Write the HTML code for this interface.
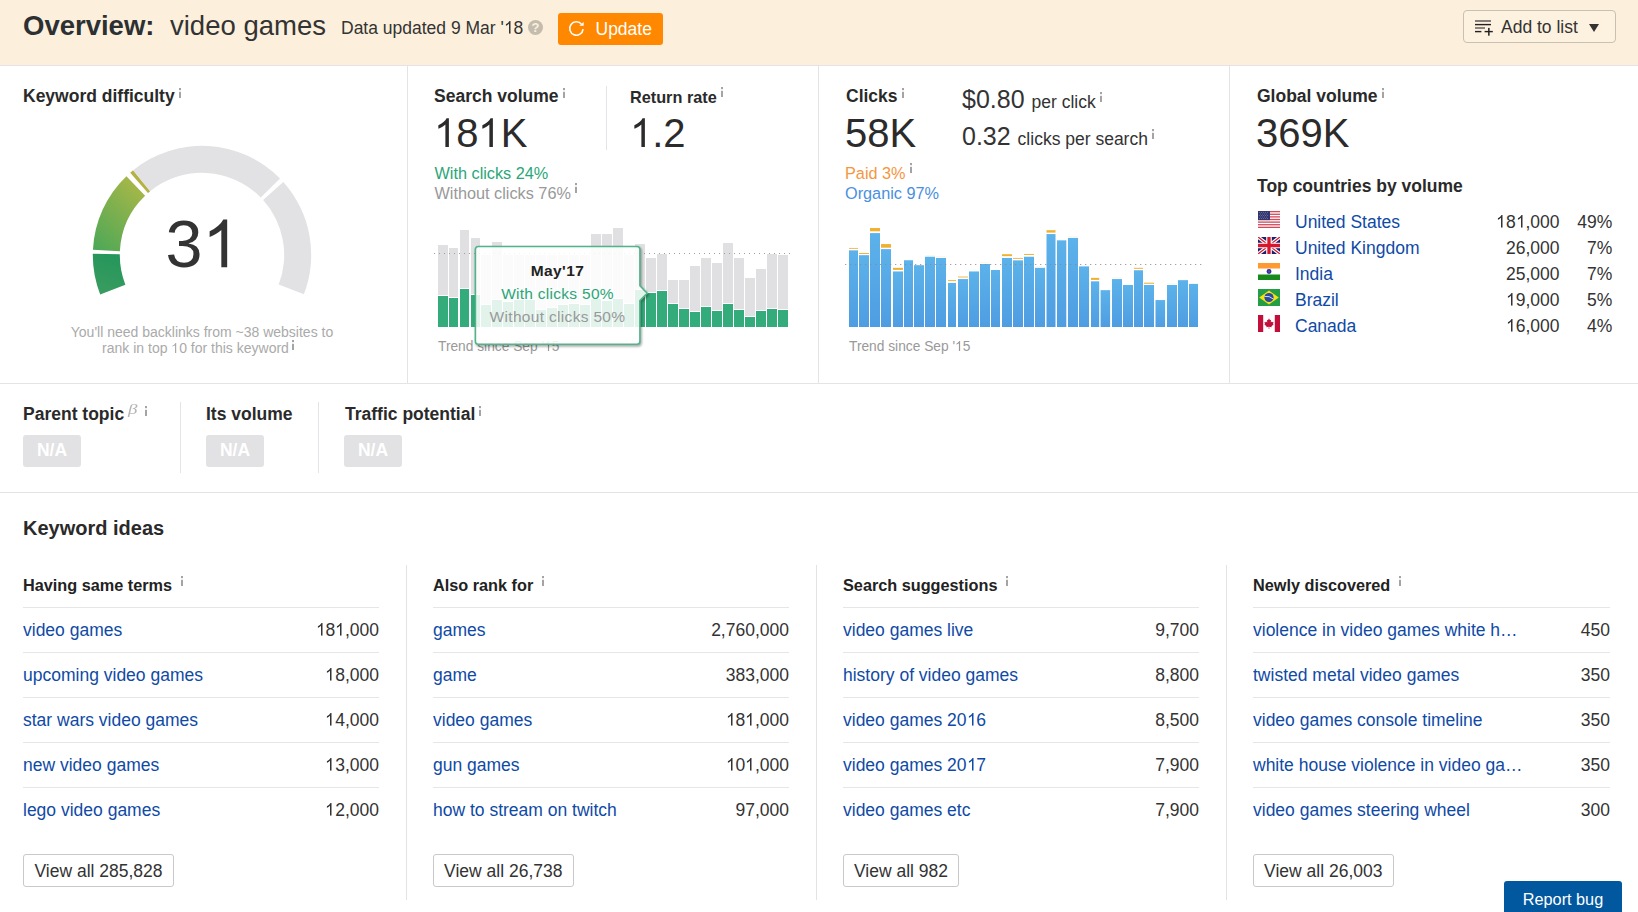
<!DOCTYPE html>
<html>
<head>
<meta charset="utf-8">
<title>Overview: video games</title>
<style>
*{box-sizing:border-box;margin:0;padding:0}
html,body{width:1638px;height:912px;overflow:hidden;background:#fff}
body{font-family:"Liberation Sans",sans-serif;font-size:17.5px;color:#333;position:relative}
.abs{position:absolute;white-space:nowrap;line-height:1}
.b{font-weight:bold;color:#2a2a2a}
.i{font-size:13.75px;color:#b3b3b3;position:relative;top:-3.5px;margin-left:3px;font-weight:normal}
.hl{position:absolute;background:#e4e4e8;height:1px}
.vl{position:absolute;background:#e4e4e8;width:1px}
a,.lnk{color:#0f4aa6;text-decoration:none}
.big{font-size:40px;color:#2b2b2b}
.one{width:0.5562em;height:0.7227em;vertical-align:baseline;fill:currentColor;display:inline-block}
.sm{font-size:13.75px;color:#999}
#hdr{position:absolute;left:0;top:0;width:1638px;height:65px;background:#fcf0dc}
.btn{position:absolute;border:1px solid #c9c9c9;border-radius:3px;background:#fff;font-size:17.5px;color:#333;line-height:1;white-space:nowrap}
.na{position:absolute;width:58px;height:32px;background:#e2e2e4;border-radius:3px;color:#fff;font-weight:bold;font-size:17.5px;text-align:center;line-height:31px}
.row{position:absolute;height:45px;border-top:1px solid #e6e6e6;font-size:17.5px;line-height:44px;white-space:nowrap}
.row .n{position:absolute;right:0;top:0;color:#333}
.colh{font-size:16.25px;font-weight:bold;color:#222}
</style>
</head>
<body>
<!-- HEADER -->
<div id="hdr"></div>
<div class="abs b" style="left:23px;top:11.5px;font-size:27.5px;color:#2d3033">Overview:</div>
<div class="abs" style="left:170px;top:11.5px;font-size:27.5px;color:#333">video games</div>
<div class="abs" style="left:341px;top:20px;font-size:17.5px;color:#333">Data updated 9 Mar '<svg class="one"><use href="#one"/></svg>8</div>
<div class="abs" style="left:528px;top:20px;width:15px;height:15px;border-radius:8px;background:#c4bcae;color:#fcf0dc;font-size:13px;font-weight:bold;text-align:center;line-height:15px">?</div>
<div class="abs" style="left:558px;top:13px;width:105px;height:32px;background:#ff8800;border-radius:3px"></div>
<svg class="abs" style="left:568px;top:20px" width="18" height="18" viewBox="0 0 18 18"><path d="M15.07 9.08A6.7 6.7 0 1 1 13.68 4.37" fill="none" stroke="#fff" stroke-width="1.6"/><path d="M15.7 1.9V5.7H11.3z" fill="#fff"/></svg>
<div class="abs" style="left:595.5px;top:21px;font-size:17.5px;color:#fff">Update</div>
<div class="abs" style="left:1463px;top:10px;width:153px;height:33px;border:1px solid #c8c0b0;border-radius:4px;background:#fdf1e0"></div>
<svg class="abs" style="left:1474px;top:19px" width="20" height="18" viewBox="0 0 20 18"><rect x="1" y="1" width="16" height="2" fill="#847e77"/><rect x="1" y="4.9" width="16" height="1.4" fill="#222"/><rect x="1" y="8" width="10" height="2" fill="#8a847c"/><rect x="1" y="11.9" width="6.4" height="1.4" fill="#222"/><rect x="10.6" y="11.9" width="8.2" height="1.4" fill="#222"/><rect x="14.1" y="8.9" width="1.5" height="7.8" fill="#222"/></svg>
<div class="abs" style="left:1501px;top:19px;font-size:17.5px;color:#333">Add to list</div>
<div class="abs" style="left:1589px;top:24px;width:0;height:0;border-left:5px solid transparent;border-right:5px solid transparent;border-top:8px solid #333"></div>

<!-- GRID LINES -->
<div class="hl" style="left:0;top:65px;width:1638px"></div>
<div class="hl" style="left:0;top:383px;width:1638px"></div>
<div class="hl" style="left:0;top:492px;width:1638px"></div>
<div class="vl" style="left:407px;top:66px;height:317px"></div>
<div class="vl" style="left:818px;top:66px;height:317px"></div>
<div class="vl" style="left:1229px;top:66px;height:317px"></div>

<!-- SECTIONS -->
<svg width="0" height="0" style="position:absolute"><defs><symbol id="one" viewBox="0 -1480 1139 1480"><path transform="scale(1 -1)" d="M763 0H583V1147Q518 1085 412.5 1023T223 930V1104Q373 1174.5 485 1275T644 1470H763V0Z"/></symbol></defs></svg>
<svg class="abs" style="left:179px;top:88px" width="2" height="10"><rect width="2" height="2" fill="#a4a4a4"/><rect y="2" width="2" height="2" fill="#a4a4a4" opacity=".18"/><rect y="4" width="2" height="6" fill="#a4a4a4"/></svg>
<svg class="abs" style="left:563px;top:88px" width="2" height="10"><rect width="2" height="2" fill="#a4a4a4"/><rect y="2" width="2" height="2" fill="#a4a4a4" opacity=".18"/><rect y="4" width="2" height="6" fill="#a4a4a4"/></svg>
<svg class="abs" style="left:721px;top:87px" width="2" height="10"><rect width="2" height="2" fill="#a4a4a4"/><rect y="2" width="2" height="2" fill="#a4a4a4" opacity=".18"/><rect y="4" width="2" height="6" fill="#a4a4a4"/></svg>
<svg class="abs" style="left:575px;top:183px" width="2" height="10"><rect width="2" height="2" fill="#a4a4a4"/><rect y="2" width="2" height="2" fill="#a4a4a4" opacity=".18"/><rect y="4" width="2" height="6" fill="#a4a4a4"/></svg>
<svg class="abs" style="left:902px;top:88px" width="2" height="10"><rect width="2" height="2" fill="#a4a4a4"/><rect y="2" width="2" height="2" fill="#a4a4a4" opacity=".18"/><rect y="4" width="2" height="6" fill="#a4a4a4"/></svg>
<svg class="abs" style="left:1100px;top:92px" width="2" height="10"><rect width="2" height="2" fill="#a4a4a4"/><rect y="2" width="2" height="2" fill="#a4a4a4" opacity=".18"/><rect y="4" width="2" height="6" fill="#a4a4a4"/></svg>
<svg class="abs" style="left:1152px;top:129px" width="2" height="10"><rect width="2" height="2" fill="#a4a4a4"/><rect y="2" width="2" height="2" fill="#a4a4a4" opacity=".18"/><rect y="4" width="2" height="6" fill="#a4a4a4"/></svg>
<svg class="abs" style="left:910px;top:163px" width="2" height="10"><rect width="2" height="2" fill="#a4a4a4"/><rect y="2" width="2" height="2" fill="#a4a4a4" opacity=".18"/><rect y="4" width="2" height="6" fill="#a4a4a4"/></svg>
<svg class="abs" style="left:1382px;top:88px" width="2" height="10"><rect width="2" height="2" fill="#a4a4a4"/><rect y="2" width="2" height="2" fill="#a4a4a4" opacity=".18"/><rect y="4" width="2" height="6" fill="#a4a4a4"/></svg>
<svg class="abs" style="left:145px;top:406px" width="2" height="10"><rect width="2" height="2" fill="#a4a4a4"/><rect y="2" width="2" height="2" fill="#a4a4a4" opacity=".18"/><rect y="4" width="2" height="6" fill="#a4a4a4"/></svg>
<svg class="abs" style="left:479px;top:406px" width="2" height="10"><rect width="2" height="2" fill="#a4a4a4"/><rect y="2" width="2" height="2" fill="#a4a4a4" opacity=".18"/><rect y="4" width="2" height="6" fill="#a4a4a4"/></svg>
<svg class="abs" style="left:181px;top:576px" width="2" height="10"><rect width="2" height="2" fill="#a4a4a4"/><rect y="2" width="2" height="2" fill="#a4a4a4" opacity=".18"/><rect y="4" width="2" height="6" fill="#a4a4a4"/></svg>
<svg class="abs" style="left:542px;top:576px" width="2" height="10"><rect width="2" height="2" fill="#a4a4a4"/><rect y="2" width="2" height="2" fill="#a4a4a4" opacity=".18"/><rect y="4" width="2" height="6" fill="#a4a4a4"/></svg>
<svg class="abs" style="left:1006px;top:576px" width="2" height="10"><rect width="2" height="2" fill="#a4a4a4"/><rect y="2" width="2" height="2" fill="#a4a4a4" opacity=".18"/><rect y="4" width="2" height="6" fill="#a4a4a4"/></svg>
<svg class="abs" style="left:1399px;top:576px" width="2" height="10"><rect width="2" height="2" fill="#a4a4a4"/><rect y="2" width="2" height="2" fill="#a4a4a4" opacity=".18"/><rect y="4" width="2" height="6" fill="#a4a4a4"/></svg>
<svg class="abs" style="left:292px;top:340px" width="2" height="10"><rect width="2" height="2" fill="#a4a4a4"/><rect y="2" width="2" height="2" fill="#a4a4a4" opacity=".18"/><rect y="4" width="2" height="6" fill="#a4a4a4"/></svg>
<!--KD-->
<svg class="abs" style="left:0;top:66px" width="407" height="317" viewBox="0 66 407 317">
<defs><linearGradient id="g1" gradientUnits="userSpaceOnUse" x1="100" y1="294" x2="112" y2="253"><stop offset="0" stop-color="#3a9c60"/><stop offset="1" stop-color="#24965a"/></linearGradient><linearGradient id="g2" gradientUnits="userSpaceOnUse" x1="94" y1="246" x2="147" y2="190"><stop offset="0" stop-color="#4fa857"/><stop offset="0.55" stop-color="#7fb04e"/><stop offset="1" stop-color="#a9b848"/></linearGradient></defs>
<path d="M100.19 294.49A109.2 109.2 0 0 1 92.81 253.86L119.80 254.14A82.2 82.2 0 0 0 125.36 284.73Z" fill="url(#g1)"/>
<path d="M92.92 249.86A109.2 109.2 0 0 1 126.42 176.18L145.11 195.67A82.2 82.2 0 0 0 119.89 251.13Z" fill="url(#g2)"/>
<path d="M130.21 172.71A109.2 109.2 0 0 1 133.13 170.26L150.16 191.21A82.2 82.2 0 0 0 147.96 193.06Z" fill="#b4b145"/>
<path d="M133.06 170.32A109.2 109.2 0 0 1 280.02 178.60L260.73 197.49A82.2 82.2 0 0 0 150.10 191.25Z" fill="#e2e2e4"/>
<path d="M283.28 182.07A109.2 109.2 0 0 1 303.88 294.31L278.69 284.59A82.2 82.2 0 0 0 263.18 200.10Z" fill="#e2e2e4"/>
</svg>
<div class="abs b" style="left:23px;top:87.5px">Keyword difficulty</div>
<div class="abs" style="left:165.4px;top:210.9px;font-size:66.5px;color:#333">3</div>
<svg class="abs" style="left:200px;top:215px" width="34" height="56" viewBox="200 215 34 56"><path transform="translate(202.4 267.2) scale(0.032470703125 -0.032470703125)" d="M763 0H583V1147Q518 1085 412.5 1023T223 930V1104Q373 1174.5 485 1275T644 1470H763V0Z" fill="#333"/></svg>
<div class="abs sm" style="left:2px;top:325px;width:400px;text-align:center;color:#aaa;font-size:14px">You'll need backlinks from ~38 websites to</div>
<div class="abs sm" style="left:-4.5px;top:341px;width:400px;text-align:center;color:#aaa;font-size:14px">rank in top <svg class="one"><use href="#one"/></svg>0 for this keyword</div>

<!--SV-->
<div class="abs b" style="left:434px;top:87.5px">Search volume</div>
<div class="abs big" style="left:434px;top:113.2px"><svg class="one"><use href="#one"/></svg>8<svg class="one"><use href="#one"/></svg>K</div>
<div class="vl" style="left:606px;top:86px;height:64px"></div>
<div class="abs b" style="left:630px;top:89px;font-size:16.25px">Return rate</div>
<div class="abs big" style="left:630px;top:113.2px"><svg class="one"><use href="#one"/></svg>.2</div>
<div class="abs" style="left:434.5px;top:165px;font-size:16.25px;color:#2aa678">With clicks 24%</div>
<div class="abs" style="left:434.5px;top:185px;font-size:16.25px;color:#999">Without clicks 76%</div>
<div class="abs sm" style="left:438px;top:340px">Trend since Sep '<svg class="one"><use href="#one"/></svg>5</div>

<svg class="abs" style="left:428px;top:220px" width="380" height="112" viewBox="428 220 380 112" shape-rendering="crispEdges">
<path d="M437.60 245.05h9.9V295.09h-9.9zM448.57 247.84h9.9V296.72h-9.9zM459.54 230.44h9.9V287.90h-9.9zM470.51 238.10h9.9V293.70h-9.9zM481.48 254.80h9.9V303.68h-9.9zM492.45 242.04h9.9V299.04h-9.9zM503.42 254.80h9.9V301.36h-9.9zM514.39 254.80h9.9V299.04h-9.9zM525.36 254.80h9.9V299.04h-9.9zM536.33 254.80h9.9V309.01h-9.9zM547.30 254.80h9.9V306.69h-9.9zM558.27 254.80h9.9V304.14h-9.9zM569.24 254.80h9.9V302.52h-9.9zM580.21 254.80h9.9V304.14h-9.9zM591.18 234.38h9.9V298.34h-9.9zM602.15 234.38h9.9V300.20h-9.9zM613.12 228.12h9.9V297.88h-9.9zM624.09 254.80h9.9V302.98h-9.9zM635.06 244.36h9.9V289.29h-9.9zM646.03 257.81h9.9V291.61h-9.9zM657.00 254.10h9.9V290.45h-9.9zM667.97 279.85h9.9V302.98h-9.9zM678.94 279.85h9.9V307.62h-9.9zM689.91 266.40h9.9V311.33h-9.9zM700.88 257.81h9.9V306.46h-9.9zM711.85 262.92h9.9V309.94h-9.9zM722.82 242.74h9.9V302.98h-9.9zM733.79 257.81h9.9V308.78h-9.9zM744.76 277.53h9.9V316.44h-9.9zM755.73 268.72h9.9V309.94h-9.9zM766.70 253.64h9.9V307.62h-9.9zM777.67 255.26h9.9V308.78h-9.9z" fill="#e0e0e3"/>
<path d="M437.60 296.09h9.9V327h-9.9zM448.57 297.72h9.9V327h-9.9zM459.54 288.90h9.9V327h-9.9zM470.51 294.70h9.9V327h-9.9zM481.48 304.68h9.9V327h-9.9zM492.45 300.04h9.9V327h-9.9zM503.42 302.36h9.9V327h-9.9zM514.39 300.04h9.9V327h-9.9zM525.36 300.04h9.9V327h-9.9zM536.33 310.01h9.9V327h-9.9zM547.30 307.69h9.9V327h-9.9zM558.27 305.14h9.9V327h-9.9zM569.24 303.52h9.9V327h-9.9zM580.21 305.14h9.9V327h-9.9zM591.18 299.34h9.9V327h-9.9zM602.15 301.20h9.9V327h-9.9zM613.12 298.88h9.9V327h-9.9zM624.09 303.98h9.9V327h-9.9zM635.06 290.29h9.9V327h-9.9zM646.03 292.61h9.9V327h-9.9zM657.00 291.45h9.9V327h-9.9zM667.97 303.98h9.9V327h-9.9zM678.94 308.62h9.9V327h-9.9zM689.91 312.33h9.9V327h-9.9zM700.88 307.46h9.9V327h-9.9zM711.85 310.94h9.9V327h-9.9zM722.82 303.98h9.9V327h-9.9zM733.79 309.78h9.9V327h-9.9zM744.76 317.44h9.9V327h-9.9zM755.73 310.94h9.9V327h-9.9zM766.70 308.62h9.9V327h-9.9zM777.67 309.78h9.9V327h-9.9z" fill="#34ab7a"/>
<path d="M434 253.5H792" stroke="#a0a0a0" stroke-width="1" stroke-dasharray="1.3 3.7" fill="none"/>
</svg>
<svg class="abs" style="left:464px;top:236px" width="200" height="120" viewBox="464 236 200 120"><defs><clipPath id="tc"><path clip-rule="evenodd" d="M464 236H664V356H464ZM478.4 246.5H636.9A3 3 0 0 1 639.9 249.5V285.8L647.1 293.2L639.9 300.6V341.2A3 3 0 0 1 636.9 344.2H478.4A3 3 0 0 1 475.4 341.2V249.5A3 3 0 0 1 478.4 246.5Z"/></clipPath><filter id="tb" x="-10%" y="-10%" width="120%" height="120%"><feGaussianBlur stdDeviation="1.3"/></filter></defs><g clip-path="url(#tc)"><path d="M478.4 246.5H636.9A3 3 0 0 1 639.9 249.5V285.8L647.1 293.2L639.9 300.6V341.2A3 3 0 0 1 636.9 344.2H478.4A3 3 0 0 1 475.4 341.2V249.5A3 3 0 0 1 478.4 246.5Z" transform="translate(1 1.5)" fill="#000" stroke="#000" stroke-width="2" opacity="0.33" filter="url(#tb)"/></g><path d="M478.4 246.5H636.9A3 3 0 0 1 639.9 249.5V285.8L647.1 293.2L639.9 300.6V341.2A3 3 0 0 1 636.9 344.2H478.4A3 3 0 0 1 475.4 341.2V249.5A3 3 0 0 1 478.4 246.5Z" fill="rgba(255,255,255,0.86)" stroke="#52b48a" stroke-width="1.6"/></svg>
<div class="abs b" style="left:476px;top:263px;width:163px;text-align:center;font-size:15.5px;color:#222;letter-spacing:0.4px">May'17</div>
<div class="abs" style="left:476px;top:286px;width:163px;text-align:center;font-size:15.5px;color:#2aa678;letter-spacing:0.28px">With clicks 50%</div>
<div class="abs" style="left:476px;top:309px;width:163px;text-align:center;font-size:15.5px;color:#999;letter-spacing:0.32px">Without clicks 50%</div>

<!--CL-->
<div class="abs b" style="left:846px;top:87.5px">Clicks</div>
<div class="abs big" style="left:845px;top:113.2px">58K</div>
<div class="abs" style="left:962px;top:87px;font-size:25px;color:#333">$0.80 <span style="font-size:17.5px">per click</span></div>
<div class="abs" style="left:962px;top:124px;font-size:25px;color:#333">0.32 <span style="font-size:17.5px">clicks per search</span></div>
<div class="abs" style="left:845px;top:165px;font-size:16.25px;color:#f59640">Paid 3%</div>
<div class="abs" style="left:845px;top:185px;font-size:16.25px;color:#4a8fe0">Organic 97%</div>
<div class="abs sm" style="left:849px;top:340px">Trend since Sep '<svg class="one"><use href="#one"/></svg>5</div>

<svg class="abs" style="left:840px;top:220px" width="380" height="112" viewBox="840 220 380 112">
<defs><linearGradient id="bg" x1="0" y1="0" x2="0" y2="1" gradientUnits="objectBoundingBox"><stop offset="0" stop-color="#5cb2ea"/><stop offset="1" stop-color="#4e9de2"/></linearGradient></defs>
<rect x="849" y="250.35" width="9" height="76.65" fill="url(#bg)"/>
<rect x="849" y="247.94" width="9" height="0.84" fill="#f0b130" opacity="1"/>
<rect x="859" y="255.17" width="10" height="71.83" fill="url(#bg)"/>
<rect x="859" y="253.00" width="10" height="0.97" fill="#f0b130" opacity="1"/>
<rect x="870" y="233.10" width="10" height="93.90" fill="url(#bg)"/>
<rect x="870" y="228.03" width="10" height="3.26" fill="#f0b130" opacity="1"/>
<rect x="881" y="249.14" width="10" height="77.86" fill="url(#bg)"/>
<rect x="881" y="244.08" width="10" height="3.62" fill="#f0b130" opacity="1"/>
<rect x="893" y="271.46" width="10" height="55.54" fill="url(#bg)"/>
<rect x="893" y="267.84" width="10" height="2.05" fill="#f0b130" opacity="1"/>
<rect x="904" y="260.24" width="9" height="66.76" fill="url(#bg)"/>
<rect x="914" y="265.19" width="10" height="61.81" fill="url(#bg)"/>
<rect x="925" y="256.74" width="10" height="70.26" fill="url(#bg)"/>
<rect x="925" y="255.66" width="10" height="0.36" fill="#f0b130" opacity="0.3"/>
<rect x="936" y="257.95" width="10" height="69.05" fill="url(#bg)"/>
<rect x="936" y="256.50" width="10" height="0.36" fill="#f0b130" opacity="0.3"/>
<rect x="948" y="282.92" width="8" height="44.08" fill="url(#bg)"/>
<rect x="948" y="280.15" width="8" height="0.97" fill="#f0b130" opacity="1"/>
<rect x="958" y="279.06" width="10" height="47.94" fill="url(#bg)"/>
<rect x="958" y="276.29" width="10" height="1.45" fill="#f0b130" opacity="0.6"/>
<rect x="969" y="271.46" width="10" height="55.54" fill="url(#bg)"/>
<rect x="980" y="263.98" width="10" height="63.02" fill="url(#bg)"/>
<rect x="980" y="262.29" width="10" height="0.36" fill="#f0b130" opacity="0.25"/>
<rect x="991" y="270.01" width="9" height="56.99" fill="url(#bg)"/>
<rect x="1002" y="257.95" width="10" height="69.05" fill="url(#bg)"/>
<rect x="1002" y="254.21" width="10" height="1.93" fill="#f0b130" opacity="1"/>
<rect x="1013" y="260.36" width="10" height="66.64" fill="url(#bg)"/>
<rect x="1013" y="257.95" width="10" height="0.84" fill="#f0b130" opacity="1"/>
<rect x="1024" y="256.74" width="10" height="70.26" fill="url(#bg)"/>
<rect x="1024" y="253.97" width="10" height="0.97" fill="#f0b130" opacity="1"/>
<rect x="1035" y="267.84" width="10" height="59.16" fill="url(#bg)"/>
<rect x="1035" y="266.51" width="10" height="0.36" fill="#f0b130" opacity="0.25"/>
<rect x="1046.5" y="234.06" width="9" height="92.94" fill="url(#bg)"/>
<rect x="1046.5" y="230.20" width="9" height="2.41" fill="#f0b130" opacity="1"/>
<rect x="1057" y="240.34" width="9.3" height="86.66" fill="url(#bg)"/>
<rect x="1068" y="237.92" width="10" height="89.08" fill="url(#bg)"/>
<rect x="1068" y="236.36" width="10" height="0.36" fill="#f0b130" opacity="0.3"/>
<rect x="1079" y="266.39" width="10" height="60.61" fill="url(#bg)"/>
<rect x="1091" y="281.35" width="8.2" height="45.65" fill="url(#bg)"/>
<rect x="1091" y="277.85" width="8.2" height="2.05" fill="#f0b130" opacity="1"/>
<rect x="1100.6" y="290.16" width="9.5" height="36.84" fill="url(#bg)"/>
<rect x="1112" y="279.06" width="10" height="47.94" fill="url(#bg)"/>
<rect x="1112" y="277.37" width="10" height="0.36" fill="#f0b130" opacity="0.25"/>
<rect x="1123" y="284.97" width="10" height="42.03" fill="url(#bg)"/>
<rect x="1134" y="270.25" width="9" height="56.75" fill="url(#bg)"/>
<rect x="1134" y="267.84" width="9" height="0.97" fill="#f0b130" opacity="1"/>
<rect x="1144" y="284.97" width="10" height="42.03" fill="url(#bg)"/>
<rect x="1144" y="282.68" width="10" height="1.09" fill="#f0b130" opacity="1"/>
<rect x="1155.5" y="300.05" width="9.6" height="26.95" fill="url(#bg)"/>
<rect x="1167" y="284.97" width="10" height="42.03" fill="url(#bg)"/>
<rect x="1167" y="283.52" width="10" height="0.36" fill="#f0b130" opacity="0.2"/>
<rect x="1178" y="280.15" width="10" height="46.85" fill="url(#bg)"/>
<rect x="1189" y="283.89" width="9" height="43.11" fill="url(#bg)"/>
<path d="M845 264.5H1203" stroke="#8a8a8a" stroke-width="1" stroke-dasharray="1.3 3.7" fill="none" opacity="0.8"/>
</svg>
<!--GV-->
<div class="abs b" style="left:1257px;top:87.5px">Global volume</div>
<div class="abs big" style="left:1256px;top:113.2px">369K</div>
<div class="abs b" style="left:1257px;top:178px">Top countries by volume</div>
<!-- flags -->
<svg class="abs" style="left:1258px;top:211px" width="22" height="17" viewBox="0 0 22 17"><rect width="22" height="17" fill="#fff"/><g fill="#d2495a"><rect y="0" width="22" height="1.31"/><rect y="2.62" width="22" height="1.31"/><rect y="5.23" width="22" height="1.31"/><rect y="7.85" width="22" height="1.31"/><rect y="10.46" width="22" height="1.31"/><rect y="13.08" width="22" height="1.31"/><rect y="15.69" width="22" height="1.31"/></g><rect width="12" height="9.15" fill="#32366f"/><g fill="#8f93b8"><circle cx="1.6" cy="1.5" r=".45"/><circle cx="3.6" cy="1.5" r=".45"/><circle cx="5.6" cy="1.5" r=".45"/><circle cx="7.6" cy="1.5" r=".45"/><circle cx="9.6" cy="1.5" r=".45"/><circle cx="2.6" cy="3" r=".45"/><circle cx="4.6" cy="3" r=".45"/><circle cx="6.6" cy="3" r=".45"/><circle cx="8.6" cy="3" r=".45"/><circle cx="1.6" cy="4.5" r=".45"/><circle cx="3.6" cy="4.5" r=".45"/><circle cx="5.6" cy="4.5" r=".45"/><circle cx="7.6" cy="4.5" r=".45"/><circle cx="9.6" cy="4.5" r=".45"/><circle cx="2.6" cy="6" r=".45"/><circle cx="4.6" cy="6" r=".45"/><circle cx="6.6" cy="6" r=".45"/><circle cx="8.6" cy="6" r=".45"/><circle cx="1.6" cy="7.5" r=".45"/><circle cx="3.6" cy="7.5" r=".45"/><circle cx="5.6" cy="7.5" r=".45"/><circle cx="7.6" cy="7.5" r=".45"/><circle cx="9.6" cy="7.5" r=".45"/></g></svg>
<svg class="abs" style="left:1258px;top:237px" width="22" height="17" viewBox="0 0 22 17"><defs><clipPath id="uk"><rect width="22" height="17"/></clipPath></defs><g clip-path="url(#uk)"><rect width="22" height="17" fill="#1b1f6e"/><path d="M0 0L22 17M22 0L0 17" stroke="#fff" stroke-width="3.6"/><path d="M0 0L22 17M22 0L0 17" stroke="#d8172c" stroke-width="1.3"/><path d="M11 0V17M0 8.5H22" stroke="#fff" stroke-width="5.6"/><path d="M11 0V17M0 8.5H22" stroke="#d8172c" stroke-width="3.3"/></g></svg>
<svg class="abs" style="left:1258px;top:263px" width="22" height="17" viewBox="0 0 22 17"><rect width="22" height="17" fill="#fff"/><rect width="22" height="5.5" fill="#ff9a33"/><rect y="11.5" width="22" height="5.5" fill="#178a1c"/><circle cx="11" cy="8.5" r="2.4" fill="#2a2a9c"/><circle cx="11" cy="8.5" r="1.2" fill="#4a4ab0"/></svg>
<svg class="abs" style="left:1258px;top:289px" width="22" height="17" viewBox="0 0 22 17"><rect width="22" height="17" fill="#239e46"/><path d="M11 1.6L20.8 8.5L11 15.4L1.2 8.5Z" fill="#f8e012"/><circle cx="11" cy="8.5" r="4.6" fill="#2b49a3"/><path d="M6.6 7.5Q11.2 6.4 15.3 10" stroke="#dfe6f5" stroke-width="0.9" fill="none"/></svg>
<svg class="abs" style="left:1258px;top:315px" width="22" height="17" viewBox="0 0 22 17"><rect width="22" height="17" fill="#fff"/><rect width="5.2" height="17" fill="#c20e38"/><rect x="16.8" width="5.2" height="17" fill="#c20e38"/><path d="M11 3.2L12 5.2L13.1 4.7L12.7 7.6L13.9 6.4L14.3 7.2L15.6 7L15 9L15.7 9.4L13.4 11.3L13.7 12.2L11.3 11.8V13.9H10.7V11.8L8.3 12.2L8.6 11.3L6.3 9.4L7 9L6.4 7L7.7 7.2L8.1 6.4L9.3 7.6L8.9 4.7L10 5.2Z" fill="#c20e38"/></svg>
<!-- rows -->
<div class="abs lnk" style="left:1295px;top:214px">United States</div><div class="abs" style="left:1439.5px;width:120px;text-align:right;top:214px"><svg class="one"><use href="#one"/></svg>8<svg class="one"><use href="#one"/></svg>,000</div><div class="abs" style="left:1559.4px;width:53px;text-align:right;top:214px">49%</div>
<div class="abs lnk" style="left:1295px;top:240px">United Kingdom</div><div class="abs" style="left:1439.5px;width:120px;text-align:right;top:240px">26,000</div><div class="abs" style="left:1559.4px;width:53px;text-align:right;top:240px">7%</div>
<div class="abs lnk" style="left:1295px;top:266px">India</div><div class="abs" style="left:1439.5px;width:120px;text-align:right;top:266px">25,000</div><div class="abs" style="left:1559.4px;width:53px;text-align:right;top:266px">7%</div>
<div class="abs lnk" style="left:1295px;top:292px">Brazil</div><div class="abs" style="left:1439.5px;width:120px;text-align:right;top:292px"><svg class="one"><use href="#one"/></svg>9,000</div><div class="abs" style="left:1559.4px;width:53px;text-align:right;top:292px">5%</div>
<div class="abs lnk" style="left:1295px;top:318px">Canada</div><div class="abs" style="left:1439.5px;width:120px;text-align:right;top:318px"><svg class="one"><use href="#one"/></svg>6,000</div><div class="abs" style="left:1559.4px;width:53px;text-align:right;top:318px">4%</div>

<!--PT-->
<div class="abs b" style="left:23px;top:406px">Parent topic<span style="font-family:'Liberation Serif',serif;font-style:italic;font-weight:normal;font-size:15.5px;color:#b4b4b4;position:relative;top:-6.5px;margin-left:4px;display:inline-block;transform:scaleX(1.22);transform-origin:left center">β</span></div>
<div class="na" style="left:23px;top:435px">N/A</div>
<div class="vl" style="left:180px;top:402px;height:71px"></div>
<div class="abs b" style="left:206px;top:406px">Its volume</div>
<div class="na" style="left:206px;top:435px">N/A</div>
<div class="vl" style="left:318px;top:402px;height:71px"></div>
<div class="abs b" style="left:345px;top:406px">Traffic potential</div>
<div class="na" style="left:344px;top:435px">N/A</div>

<!--KI-->
<div class="abs b" style="left:23px;top:517.5px;font-size:20px">Keyword ideas</div>
<div class="vl" style="background:#e3e3e3;left:406px;top:565px;height:335px"></div>
<div class="vl" style="background:#e3e3e3;left:816px;top:565px;height:335px"></div>
<div class="vl" style="background:#e3e3e3;left:1226px;top:565px;height:335px"></div>
<div class="abs colh" style="left:23px;top:577px">Having same terms</div>
<div class="row" style="left:23px;top:607px;width:356px"><span class="lnk">video games</span><span class="n"><svg class="one"><use href="#one"/></svg>8<svg class="one"><use href="#one"/></svg>,000</span></div>
<div class="row" style="left:23px;top:652px;width:356px"><span class="lnk">upcoming video games</span><span class="n"><svg class="one"><use href="#one"/></svg>8,000</span></div>
<div class="row" style="left:23px;top:697px;width:356px"><span class="lnk">star wars video games</span><span class="n"><svg class="one"><use href="#one"/></svg>4,000</span></div>
<div class="row" style="left:23px;top:742px;width:356px"><span class="lnk">new video games</span><span class="n"><svg class="one"><use href="#one"/></svg>3,000</span></div>
<div class="row" style="left:23px;top:787px;width:356px"><span class="lnk">lego video games</span><span class="n"><svg class="one"><use href="#one"/></svg>2,000</span></div>
<div class="btn" style="left:23px;top:854px;width:151px;height:33px;text-align:center;line-height:33px">View all 285,828</div>
<div class="abs colh" style="left:433px;top:577px">Also rank for</div>
<div class="row" style="left:433px;top:607px;width:356px"><span class="lnk">games</span><span class="n">2,760,000</span></div>
<div class="row" style="left:433px;top:652px;width:356px"><span class="lnk">game</span><span class="n">383,000</span></div>
<div class="row" style="left:433px;top:697px;width:356px"><span class="lnk">video games</span><span class="n"><svg class="one"><use href="#one"/></svg>8<svg class="one"><use href="#one"/></svg>,000</span></div>
<div class="row" style="left:433px;top:742px;width:356px"><span class="lnk">gun games</span><span class="n"><svg class="one"><use href="#one"/></svg>0<svg class="one"><use href="#one"/></svg>,000</span></div>
<div class="row" style="left:433px;top:787px;width:356px"><span class="lnk">how to stream on twitch</span><span class="n">97,000</span></div>
<div class="btn" style="left:433px;top:854px;width:140.5px;height:33px;text-align:center;line-height:33px">View all 26,738</div>
<div class="abs colh" style="left:843px;top:577px">Search suggestions</div>
<div class="row" style="left:843px;top:607px;width:356px"><span class="lnk">video games live</span><span class="n">9,700</span></div>
<div class="row" style="left:843px;top:652px;width:356px"><span class="lnk">history of video games</span><span class="n">8,800</span></div>
<div class="row" style="left:843px;top:697px;width:356px"><span class="lnk">video games 20<svg class="one"><use href="#one"/></svg>6</span><span class="n">8,500</span></div>
<div class="row" style="left:843px;top:742px;width:356px"><span class="lnk">video games 20<svg class="one"><use href="#one"/></svg>7</span><span class="n">7,900</span></div>
<div class="row" style="left:843px;top:787px;width:356px"><span class="lnk">video games etc</span><span class="n">7,900</span></div>
<div class="btn" style="left:843px;top:854px;width:116px;height:33px;text-align:center;line-height:33px">View all 982</div>
<div class="abs colh" style="left:1253px;top:577px">Newly discovered</div>
<div class="row" style="left:1253px;top:607px;width:357px"><span class="lnk">violence in video games white h…</span><span class="n">450</span></div>
<div class="row" style="left:1253px;top:652px;width:357px"><span class="lnk">twisted metal video games</span><span class="n">350</span></div>
<div class="row" style="left:1253px;top:697px;width:357px"><span class="lnk">video games console timeline</span><span class="n">350</span></div>
<div class="row" style="left:1253px;top:742px;width:357px"><span class="lnk">white house violence in video ga…</span><span class="n">350</span></div>
<div class="row" style="left:1253px;top:787px;width:357px"><span class="lnk">video games steering wheel</span><span class="n">300</span></div>
<div class="btn" style="left:1253px;top:854px;width:140.5px;height:33px;text-align:center;line-height:33px">View all 26,003</div>
<div class="abs" style="left:1504px;top:881px;width:118px;height:35px;background:#02589f;border-radius:3px 3px 0 0;color:#fff;font-size:16.25px;text-align:center;line-height:36px">Report bug</div>
</body>
</html>
